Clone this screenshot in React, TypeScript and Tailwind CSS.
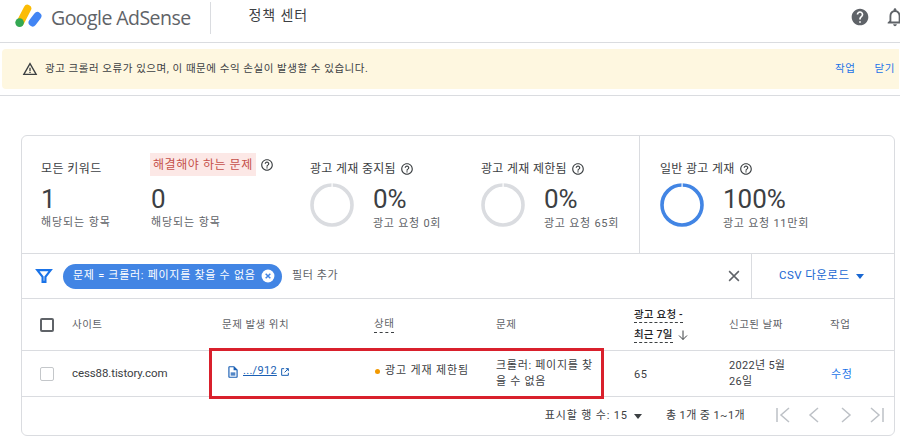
import React from 'react';

const kr = "font-['Roboto','Noto_Sans_CJK_KR',sans-serif]";

const HelpIcon = ({ size = 14 }: { size?: number }) => (
  <svg width={size} height={size} viewBox="0 0 24 24" fill="#3c4043" className="shrink-0">
    <path d="M11 18h2v-2h-2v2zm1-16C6.48 2 2 6.48 2 12s4.48 10 10 10 10-4.48 10-10S17.52 2 12 2zm0 18c-4.41 0-8-3.59-8-8s3.59-8 8-8 8 3.59 8 8-3.59 8-8 8zm0-14c-2.21 0-4 1.79-4 4h2c0-1.1.9-2 2-2s2 .9 2 2c0 2-3 1.75-3 5h2c0-2.25 3-2.5 3-5 0-2.21-1.79-4-4-4z" />
  </svg>
);

const Donut = ({ active }: { active?: boolean }) => (
  <svg width="44" height="44" viewBox="0 0 44 44" className="shrink-0 mt-[1px]">
    <circle cx="22" cy="22" r="20" fill="none" stroke={active ? '#4285e4' : '#dadce0'} strokeWidth="3.6" />
    <rect x="21.5" y="0" width="1.2" height="4.5" fill="#ffffff" />
  </svg>
);

const Stat = ({ title, value, sub, active, cls }: { title: string; value: string; sub: string; active?: boolean; cls: string }) => (
  <div className={cls}>
    <div className="flex items-center gap-[4px] h-[20px] text-[12px] tracking-[0.3px] text-[#3c4043]">
      <span>{title}</span>
      <HelpIcon />
    </div>
    <div className="flex items-start gap-[19px] mt-[3px]">
      <Donut active={active} />
      <div className="flex flex-col">
        <span className="text-[26px] leading-[30px] mt-[2px] text-[#3c4043]">{value}</span>
        <span className="text-[11px] leading-[16px] mt-[2px] tracking-[0.75px] text-[#5f6368]">{sub}</span>
      </div>
    </div>
  </div>
);

const Pager = ({ d }: { d: string }) => (
  <svg width="24" height="24" viewBox="0 0 24 24" fill="none" stroke="#bdc1c6" strokeWidth="1.5">
    <path d={d} />
  </svg>
);

export default function App() {
  return (
    <div className={`${kr} relative w-[900px] h-[443px] overflow-hidden bg-white`}>
      {/* Header */}
      <header className="flex items-center h-[43px] pb-[6px] border-b border-[#dadce0]">
        <svg width="28" height="24" viewBox="0 0 28 24" className="ml-[15px] self-start mt-[4px] shrink-0">
          <path d="M5.5 18 12.5 4.5" stroke="#fbbc04" strokeWidth="7.6" strokeLinecap="round" />
          <path d="M17.5 18.5 22.5 12" stroke="#4285f4" strokeWidth="7.8" strokeLinecap="round" />
          <circle cx="4.6" cy="18.6" r="4.3" fill="#34a853" />
        </svg>
        <span className="ml-[8px] text-[19.5px] leading-none text-[#5f6368] font-['Open_Sans',sans-serif] tracking-[-0.55px] whitespace-nowrap">Google AdSense</span>
        <div className="ml-[19px] w-px h-[32px] bg-[#dadce0]" />
        <span className="ml-[38px] mt-[-6px] text-[14px] tracking-[0.9px] text-[#3c4043]">정책 센터</span>
        <div className="ml-auto mr-[-6px] mt-[-2px] flex items-center gap-[14px]">
          <svg width="20" height="20" viewBox="0 0 24 24" fill="#5f6368">
            <path d="M12 2C6.48 2 2 6.48 2 12s4.48 10 10 10 10-4.48 10-10S17.52 2 12 2zm1 17h-2v-2h2v2zm2.07-7.75-.9.92C13.45 12.9 13 13.5 13 15h-2v-.5c0-1.1.45-2.1 1.17-2.83l1.24-1.26c.37-.36.59-.86.59-1.41 0-1.1-.9-2-2-2s-2 .9-2 2H8c0-2.21 1.79-4 4-4s4 1.79 4 4c0 .88-.36 1.68-.93 2.25z" />
          </svg>
          <svg width="22" height="22" viewBox="0 0 24 24" fill="#5f6368">
            <path d="M12 22c1.1 0 2-.9 2-2h-4c0 1.1.9 2 2 2zm6-6v-5c0-3.07-1.63-5.64-4.5-6.32V4c0-.83-.67-1.5-1.5-1.5s-1.5.67-1.5 1.5v.68C7.64 5.36 6 7.92 6 11v5l-2 2v1h16v-1l-2-2zm-2 1H8v-6c0-2.48 1.51-4.5 4-4.5s4 2.02 4 4.5v6z" />
          </svg>
        </div>
      </header>

      {/* Warning banner */}
      <div className="border-b border-[#dadce0] pt-[6px] pb-[7px] h-[53px]">
        <div className="flex items-center h-[40px] mr-[1px] ml-[2px] rounded-l-[4px] bg-[#fef7e0] pl-[20px] text-[10.5px] tracking-[0.55px] text-[#3c4043]">
          <svg width="16" height="16" viewBox="0 0 24 24" fill="#3c4043" className="shrink-0">
            <path d="M12 5.99 19.53 19H4.47L12 5.99M12 2 1 21h22L12 2zm1 14h-2v2h2v-2zm0-6h-2v5h2v-5z" />
          </svg>
          <span className="ml-[7px]">광고 크롤러 오류가 있으며, 이 때문에 수익 손실이 발생할 수 있습니다.</span>
          <div className="ml-auto flex gap-[19px] pr-[4px] text-[#1a73e8] tracking-[0.6px]">
            <span>작업</span>
            <span>닫기</span>
          </div>
        </div>
      </div>

      {/* Card */}
      <div className="mt-[39px] ml-[21px] w-[874px] h-[301px] rounded-[6px] border border-[#dadce0] flex flex-col">
        {/* Summary */}
        <div className="flex h-[118px] border-b border-[#dadce0]">
          <div className="w-[128px] pl-[19px] pt-[23px]">
            <div className="flex items-center h-[20px] text-[12px] tracking-[0.4px] text-[#3c4043]">모든 키워드</div>
            <div className="text-[26px] leading-[30px] mt-[5px] text-[#3c4043]">1</div>
            <div className="text-[11px] leading-[16px] mt-[1px] tracking-[0.9px] text-[#5f6368]">해당되는 항목</div>
          </div>
          <div className="w-[160px] pt-[17px]">
            <div className="flex items-center gap-[4px]">
              <span className="h-[23px] flex items-center bg-[#fce8e6] px-[3px] text-[12px] tracking-[0.55px] text-[#c5504a]">해결해야 하는 문제</span>
              <HelpIcon />
            </div>
            <div className="text-[26px] leading-[30px] mt-[8px] ml-[1px] text-[#3c4043]">0</div>
            <div className="text-[11px] leading-[16px] mt-[1px] ml-[1px] tracking-[0.9px] text-[#5f6368]">해당되는 항목</div>
          </div>
          <Stat cls="w-[171px] pt-[23px]" title="광고 게재 중지됨" value="0%" sub="광고 요청 0회" />
          <Stat cls="w-[158px] pt-[23px]" title="광고 게재 제한됨" value="0%" sub="광고 요청 65회" />
          <Stat cls="flex-1 border-l border-[#dadce0] pl-[20px] pt-[23px]" title="일반 광고 게재" value="100%" sub="광고 요청 11만회" active />
        </div>

        {/* Filter bar */}
        <div className="flex items-center h-[45px] border-b border-[#dadce0]">
          <svg width="20" height="20" viewBox="0 0 24 24" fill="none" stroke="#1a73e8" strokeWidth="2.6" className="ml-[12px] shrink-0">
            <path d="M4 5h16l-6.3 8v6h-3.4v-6L4 5z" />
          </svg>
          <div className="ml-[9px] h-[25px] w-[219px] rounded-full bg-[#4285e4] flex items-center pl-[10px] text-[11px] tracking-[0.72px] text-white whitespace-nowrap">
            <span>문제 = 크롤러: 페이지를 찾을 수 없음</span>
            <svg width="14" height="14" viewBox="0 0 24 24" className="ml-auto mr-[7px] shrink-0">
              <circle cx="12" cy="12" r="11" fill="#ffffff" />
              <path d="M8 8l8 8M16 8l-8 8" stroke="#4285e4" strokeWidth="2.6" />
            </svg>
          </div>
          <span className="ml-[10px] text-[11px] tracking-[0.6px] text-[#5f6368]">필터 추가</span>
          <svg width="18" height="18" viewBox="0 0 24 24" fill="none" stroke="#5f6368" strokeWidth="2" className="ml-auto mr-[8px] shrink-0">
            <path d="M5.5 5.5l13 13M18.5 5.5l-13 13" />
          </svg>
          <div className="w-[143px] h-full border-l border-[#dadce0] flex items-center pl-[27px] text-[11.5px] tracking-[0.45px] text-[#1967d2]">
            <span>CSV 다운로드</span>
            <svg width="8" height="5" viewBox="0 0 8 5" fill="#1967d2" className="ml-[7px]">
              <path d="M0 0h8L4 5z" />
            </svg>
          </div>
        </div>

        {/* Table head */}
        <div className="grid grid-cols-[50px_150px_152px_122px_138px_95px_101px_1fr] h-[52px] items-center border-b border-[#dadce0] text-[10.5px] tracking-[0.5px] text-[#5f6368]">
          <div className="pl-[18px]">
            <div className="w-[14px] h-[14px] rounded-[2px] border-2 border-[#5f6368]" />
          </div>
          <span>사이트</span>
          <span>문제 발생 위치</span>
          <span className="w-fit border-b border-dashed border-[#3c4043]">상태</span>
          <span>문제</span>
          <div className="text-[#202124] font-medium tracking-[0.2px]">
            <div className="w-fit border-b border-dashed border-[#3c4043] leading-[15px]">광고 요청 -</div>
            <div className="flex items-center gap-[4px] mt-[4px]">
              <span className="border-b border-dashed border-[#3c4043] leading-[15px]">최근 7일</span>
              <svg width="12" height="12" viewBox="0 0 12 12" fill="none" stroke="#3c4043" strokeWidth="1">
                <path d="M6 1.5v9M2 6.5l4 4 4-4" />
              </svg>
            </div>
          </div>
          <span>신고된 날짜</span>
          <span>작업</span>
        </div>

        {/* Row */}
        <div className="grid grid-cols-[50px_150px_152px_122px_138px_95px_101px_1fr] h-[46px] items-center border-b border-[#dadce0] text-[11px] tracking-[0.55px] text-[#3c4043]">
          <div className="pl-[18px]">
            <div className="w-[14px] h-[14px] rounded-[2px] border border-[#c4c7ca]" />
          </div>
          <span className="text-[11.5px] tracking-[-0.1px]">cess88.tistory.com</span>
          <div className="flex items-center pl-[4px] mb-[4px] text-[#1a5fb4]">
            <svg width="14" height="14" viewBox="0 0 24 24" fill="#1a5fb4" className="shrink-0">
              <path d="M14 2H6c-1.1 0-2 .9-2 2v16c0 1.1.9 2 2 2h12c1.1 0 2-.9 2-2V8l-6-6zm4 18H6V4h7v5h5v11zM8 13h8v2H8v-2zm0 3h8v2H8v-2z" />
            </svg>
            <span className="ml-[3px] underline tracking-[0.3px]">.../912</span>
            <svg width="10" height="10" viewBox="0 0 24 24" fill="none" stroke="#1a5fb4" strokeWidth="2.4" className="ml-[3px] shrink-0">
              <path d="M10 4H4v16h16v-6M14 4h6v6M20 4l-9 9" />
            </svg>
          </div>
          <div className="flex items-center mb-[4px] tracking-[0.85px]">
            <span className="w-[5px] h-[5px] rounded-full bg-[#f29900] ml-[1px]" />
            <span className="ml-[5px]">광고 게재 제한됨</span>
          </div>
          <span className="leading-[16px] w-[104px] break-all tracking-[0.7px]">크롤러: 페이지를 찾을 수 없음</span>
          <span className="mt-[3px]">65</span>
          <span className="leading-[16px] w-[70px] tracking-[0.3px]">2022년 5월 26일</span>
          <span className="mt-[3px] ml-[1px] text-[#1a73e8]">수정</span>
        </div>

        {/* Pagination */}
        <div className="flex-1 flex items-center justify-end pr-[4px] text-[11px] tracking-[0.55px] text-[#3c4043]">
          <span className="tracking-[0.85px]">표시할 행 수: 15</span>
          <svg width="8" height="5" viewBox="0 0 8 5" fill="#3c4043" className="ml-[6px]">
            <path d="M0 0h8L4 5z" />
          </svg>
          <span className="ml-[24px] mr-[25px] tracking-[0.4px]">총 1개 중 1~1개</span>
          <div className="flex gap-[8px] mt-[-2px]">
            <Pager d="M7 5v14M19 5l-8 7 8 7" />
            <Pager d="M16 5l-8 7 8 7" />
            <Pager d="M8 5l8 7-8 7" />
            <Pager d="M5 5l8 7-8 7M17 5v14" />
          </div>
        </div>
      </div>

      {/* Red highlight around the problem cells */}
      <div className="absolute left-[209px] top-[348px] w-[395px] h-[51px] border-[3px] border-[#d9202c] pointer-events-none" />
    </div>
  );
}
